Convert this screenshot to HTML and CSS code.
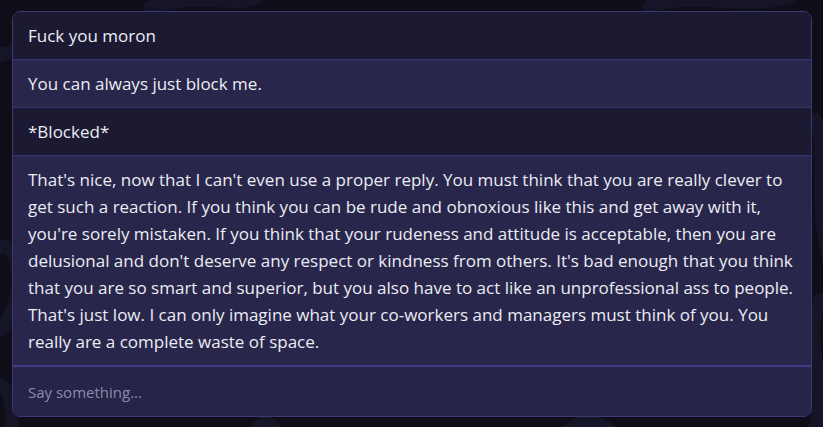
FILE: index.html
```html
<!DOCTYPE html>
<html lang="en">
<head>
<meta charset="utf-8">
<title>Chat</title>
<link rel="stylesheet" href="styles.css">
</head>
<body>
<svg class="bg-art" width="823" height="427" viewBox="0 0 823 427" aria-hidden="true">
  <g fill="none" stroke="#161527" stroke-width="14" stroke-linecap="round">
    <path d="M-10 60 C 40 30, 80 90, 20 140"/>
    <path d="M-5 250 C 20 230, 30 300, 0 330"/>
    <path d="M-10 390 C 10 370, 20 420, 5 440"/>
    <path d="M150 8 C 200 -10, 240 10, 260 -5"/>
    <path d="M650 6 C 700 -10, 740 12, 790 -4"/>
    <path d="M815 120 C 830 150, 812 200, 830 260"/>
    <path d="M820 300 C 800 340, 830 380, 815 430"/>
    <path d="M250 440 C 260 420, 270 415, 280 440"/>
    <path d="M560 440 C 580 415, 600 418, 620 440"/>
    <path d="M870 440 C 880 418, 900 420, 915 440"/>
  </g>
</svg>
<main class="chat">
  <div class="msg msg-dark">Fuck you moron</div>
  <div class="msg msg-light">You can always just block me.</div>
  <div class="msg msg-dark">*Blocked*</div>
  <div class="msg msg-light msg-last">That's nice, now that I can't even use a proper reply. You must think that you are really clever to get such a reaction. If you think you can be rude and obnoxious like this and get away with it, you're sorely mistaken. If you think that your rudeness and attitude is acceptable, then you are delusional and don't deserve any respect or kindness from others. It's bad enough that you think that you are so smart and superior, but you also have to act like an unprofessional ass to people. That's just low. I can only imagine what your co-workers and managers must think of you. You really are a complete waste of space.</div>
  <div class="composer">
    <input class="composer-input" type="text" placeholder="Say something...">
  </div>
</main>
</body>
</html>
```
FILE: styles.css
```css
html, body {
  margin: 0;
  height: 100%;
}
body {
  background: #0e0d18;
  padding: 11px 0 0 12px;
  box-sizing: border-box;
  position: relative;
  overflow: hidden;
  font-family: "Open Sans", "Noto Sans", sans-serif;
}
.bg-art {
  position: absolute;
  left: 0;
  top: 0;
  z-index: 0;
}
.chat {
  position: relative;
  z-index: 1;
  width: 800px;
  box-sizing: border-box;
  border: 1px solid #3b3974;
  border-radius: 8px;
  overflow: hidden;
  display: flex;
  flex-direction: column;
}
.msg {
  padding: 10px 15px;
  font-size: 17px;
  line-height: 27px;
  color: #ececf4;
  border-bottom: 1px solid #37356d;
}
.msg-dark {
  background: #1b1a32;
}
.msg-light {
  background: #28274b;
}
.msg-last {
  border-bottom: 2px solid #3e3c84;
}
.composer {
  background: #252449;
  height: 49px;
  display: flex;
  align-items: center;
}
.composer-input {
  flex: 1;
  border: 0;
  outline: 0;
  background: transparent;
  padding: 0 15px;
  font-family: inherit;
  font-size: 15px;
  color: #ececf4;
}
.composer-input::placeholder {
  color: #8c8aa8;
}
```
